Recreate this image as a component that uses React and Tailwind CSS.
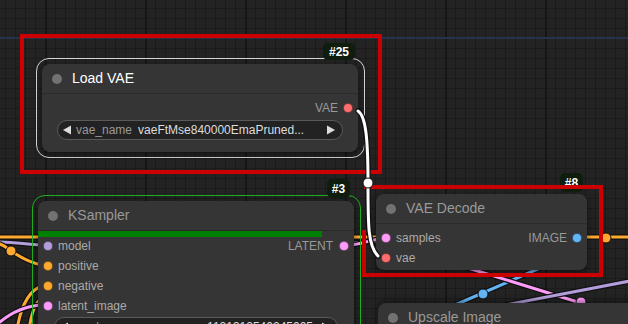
import React from "react";

const SLOT = {
  MODEL: "#b39ddb",
  CONDITIONING: "#ffa931",
  LATENT: "#ff9cf9",
  VAE: "#ff6e6e",
  IMAGE: "#64b5f6",
};

const Dot = ({ color, className = "" }) => (
  <span
    className={`block w-[10px] h-[10px] rounded-full border border-black/50 ${className}`}
    style={{ backgroundColor: color }}
  />
);

const Badge = ({ children, className }) => (
  <div
    className={`absolute flex items-center justify-center rounded-[5px] bg-[#0f1d0f] text-white text-[12px] font-bold ${className}`}
  >
    {children}
  </div>
);

const Title = ({ text, light }) => (
  <div className="flex items-center h-[30px] border-b border-[#2b2b2b] pl-[10px]">
    <span className="w-[10px] h-[10px] rounded-full bg-[#727272]" />
    <span
      className={`ml-[10px] text-[14px] ${light ? "text-white" : "text-[#999]"}`}
    >
      {text}
    </span>
  </div>
);

const InSlot = ({ label, color }) => (
  <div className="flex items-center h-5 pl-[5px]">
    <Dot color={color} />
    <span className="ml-[5px] text-[12px] text-[#aaa]">{label}</span>
  </div>
);

const Arrow = ({ dir }) => (
  <svg width="10" height="10" viewBox="0 0 10 10" className="shrink-0">
    {dir === "left" ? (
      <polygon points="9,0.5 9,9.5 1,5" fill="#ddd" />
    ) : (
      <polygon points="1,0.5 1,9.5 9,5" fill="#ddd" />
    )}
  </svg>
);

const Widget = ({ name, value, className = "" }) => (
  <div
    className={`flex items-center h-5 rounded-full border border-[#595959] bg-[#222] pl-[4px] pr-[6px] text-[12px] ${className}`}
  >
    <Arrow dir="left" />
    <span className="ml-[4px] text-[#999]">{name}</span>
    {value && <span className="ml-[6px] text-[#ddd]">{value}</span>}
    <span className="flex-1" />
    <Arrow dir="right" />
  </div>
);

const Link = ({ d, color }) => (
  <g fill="none" strokeLinecap="round">
    <path d={d} stroke="#111" strokeWidth="5.5" />
    <path d={d} stroke={color} strokeWidth="3" />
  </g>
);

const LinkDot = ({ x, y, color }) => (
  <circle cx={x} cy={y} r="5" fill={color} stroke="#111" strokeWidth="1" />
);

export default function App() {
  return (
    <div className="relative w-[628px] h-[324px] overflow-hidden bg-[#232323] font-['Liberation_Sans',Arial,sans-serif] bg-[image:linear-gradient(to_right,#161616_2px,transparent_2px),linear-gradient(to_right,#1b1b1b_1px,transparent_1px),linear-gradient(to_bottom,#1b1b1b_1px,transparent_1px)] bg-[size:100px_100px,10px_10px,10px_10px] bg-[position:45px_0px,5px_0px,0px_8px]">
      {/* group edge */}
      <div className="absolute left-0 right-0 top-[37px] h-[2px] bg-[#27324a]" />

      {/* links under the nodes */}
      <svg className="absolute inset-0" width="628" height="324">
        <Link d="M0 237 L628 237" color={SLOT.CONDITIONING} />
        <Link d="M0 242 C 20 242, 25 245, 42 245" color={SLOT.MODEL} />
        <Link d="M0 244 C 5 246, 8 249, 11 251 C 20 257, 30 263, 42 265" color={SLOT.CONDITIONING} />
        <Link d="M18 324 C 22 305, 30 290, 42 286" color={SLOT.CONDITIONING} />
        <Link d="M30 324 C 32 312, 36 302, 42 298" color={SLOT.CONDITIONING} />
        <Link d="M0 322 C 12 312, 26 306, 42 305" color={SLOT.LATENT} />
        <Link d="M350 243 C 362 243, 370 241, 382 241" color={SLOT.MODEL} />
        <Link d="M349 245 C 362 245, 370 239, 382 239" color={SLOT.LATENT} />
        <Link d="M455 305 L540 268" color={SLOT.IMAGE} />
        <Link d="M468 268 L600 309" color={SLOT.LATENT} />
        <Link d="M500 306 L630 281" color={SLOT.MODEL} />
        <LinkDot x={11} y={251} color={SLOT.CONDITIONING} />
        <LinkDot x={483} y={294} color={SLOT.IMAGE} />
        <LinkDot x={581} y={302} color={SLOT.LATENT} />
        <LinkDot x={606} y={238} color={SLOT.CONDITIONING} />
      </svg>

      {/* Load VAE (selected) */}
      <div className="absolute left-[36px] top-[58px] w-[329px] h-[100px] rounded-[13px] border-[1.5px] border-[#d6d6d6]" />
      <div className="absolute left-[42px] top-[64px] w-[316px] h-[88px] rounded-[8px] bg-[#353535] shadow-[0_2px_6px_rgba(0,0,0,0.5)]">
        <Title text="Load VAE" light />
        <div className="flex items-center justify-end h-5 mt-[4px] pr-[5px]">
          <span className="text-[12px] text-[#999]">VAE</span>
          <Dot color={SLOT.VAE} className="ml-[5px]" />
        </div>
        <Widget
          name="vae_name"
          value="vaeFtMse840000EmaPruned..."
          className="mt-[2px] mx-[15px]"
        />
      </div>
      <Badge className="left-[323px] top-[43px] w-[32px] h-[17px]">#25</Badge>

      {/* KSampler (running) */}
      <div className="absolute left-[32px] top-[195px] w-[329px] h-[160px] rounded-[13px] border border-[#1fb01f]" />
      <div className="absolute left-[38px] top-[201px] w-[316px] h-[150px] rounded-[8px] bg-[#353535] shadow-[0_2px_6px_rgba(0,0,0,0.5)]">
        <Title text="KSampler" />
        <div className="absolute left-0 top-[30px] w-[284px] h-[6px] bg-[#008000]" />
        <div className="pt-[5px]">
          <div className="flex items-center justify-between">
            <InSlot label="model" color={SLOT.MODEL} />
            <div className="flex items-center pr-[5px]">
              <span className="text-[12px] text-[#999]">LATENT</span>
              <Dot color={SLOT.LATENT} className="ml-[6px]" />
            </div>
          </div>
          <InSlot label="positive" color={SLOT.CONDITIONING} />
          <InSlot label="negative" color={SLOT.CONDITIONING} />
          <InSlot label="latent_image" color={SLOT.LATENT} />
          <div className="flex items-center h-5 mt-[1px] ml-[16px] mr-[16px] rounded-full border border-[#595959] bg-[#222] pl-[4px] pr-[6px] text-[12px]">
            <Arrow dir="left" />
            <span className="ml-[4px] text-[#999]">seed</span>
            <span className="flex-1" />
            <span className="text-[#ddd] mr-[8px]">1121312540245005</span>
            <Arrow dir="right" />
          </div>
        </div>
      </div>
      <Badge className="left-[327px] top-[179px] w-[23px] h-[19px]">#3</Badge>

      {/* VAE Decode */}
      <div className="absolute left-[376px] top-[194px] w-[211px] h-[76px] rounded-[8px] bg-[#353535] shadow-[0_2px_6px_rgba(0,0,0,0.5)]">
        <Title text="VAE Decode" />
        <div className="pt-[4px]">
          <div className="flex items-center justify-between">
            <InSlot label="samples" color={SLOT.LATENT} />
            <div className="flex items-center pr-[5px]">
              <span className="text-[12px] text-[#999]">IMAGE</span>
              <Dot color={SLOT.IMAGE} className="ml-[5px]" />
            </div>
          </div>
          <InSlot label="vae" color={SLOT.VAE} />
        </div>
      </div>
      <Badge className="left-[560px] top-[173px] w-[23px] h-[19px]">#8</Badge>

      {/* Upscale Image */}
      <div className="absolute left-[378px] top-[303px] w-[280px] h-[60px] rounded-[8px] bg-[#353535] shadow-[0_-1px_6px_rgba(0,0,0,0.5)]">
        <Title text="Upscale Image" />
      </div>

      {/* red annotation boxes */}
      <svg className="absolute inset-0" width="628" height="324">
        <rect x="22" y="36" width="358" height="136" fill="none" stroke="#cc0000" strokeWidth="4" />
        <path d="M364 230 L364 275 L601 275 L601 187 L364 187" fill="none" stroke="#cc0000" strokeWidth="4" />
      </svg>

      {/* VAE link, drawn over the annotations */}
      <svg className="absolute inset-0" width="628" height="324">
        <Link d="M358 111 C 366 116, 368 140, 368 183 C 368 226, 368 246, 378 256" color="#ffffff" />
        <LinkDot x={368} y={183} color="#ffffff" />
      </svg>
    </div>
  );
}
